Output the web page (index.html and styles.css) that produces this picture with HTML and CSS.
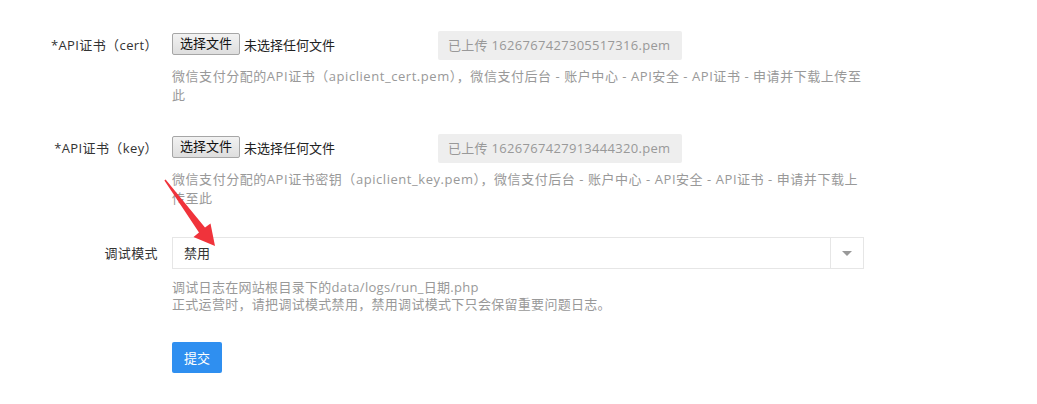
FILE: index.html
```html
<html>
  <head>
    <meta charset="utf-8">
    <title>支付设置</title>
    <link rel="stylesheet" href="styles.css">
  </head>
  <body>
    <div class="form">
      <div class="form-row">
        <label class="form-label">*API证书（cert）</label>
        <div class="form-field">
          <div class="upload-line">
            <div class="file-input">
              <span class="file-btn">选择文件</span>
              <span class="file-name">未选择任何文件</span>
            </div>
            <div class="uploaded">已上传 1626767427305517316.pem</div>
          </div>
          <div class="help">微信支付分配的API证书（apiclient_cert.pem），微信支付后台 - 账户中心 - API安全 - API证书 - 申请并下载上传至此</div>
        </div>
      </div>

      <div class="form-row">
        <label class="form-label">*API证书（key）</label>
        <div class="form-field">
          <div class="upload-line">
            <div class="file-input">
              <span class="file-btn">选择文件</span>
              <span class="file-name">未选择任何文件</span>
            </div>
            <div class="uploaded">已上传 1626767427913444320.pem</div>
          </div>
          <div class="help">微信支付分配的API证书密钥（apiclient_key.pem），微信支付后台 - 账户中心 - API安全 - API证书 - 申请并下载上传至此</div>
        </div>
      </div>

      <div class="form-row">
        <label class="form-label label-select">调试模式</label>
        <div class="form-field">
          <div class="select">
            <span class="select-value">禁用</span>
            <span class="select-arrow"></span>
          </div>
          <div class="help help-debug">调试日志在网站根目录下的data/logs/run_日期.php<br>正式运营时，请把调试模式禁用，禁用调试模式下只会保留重要问题日志。</div>
        </div>
      </div>

      <div class="form-row">
        <div class="form-label"></div>
        <div class="form-field">
          <button class="btn-submit">提交</button>
        </div>
      </div>
    </div>

    <!-- 标注箭头 -->
    <svg class="mark-arrow" width="1037" height="404" viewBox="0 0 1037 404">
      <polygon fill="#f0333b" points="164.4,180.4 165.6,179.6 205,227.6 210.5,223.5 215,246 193.5,237 199,232.4"/>
    </svg>
  </body>
</html>
```

FILE: styles.css
```css
* {
  box-sizing: border-box;
}

body {
  margin: 0;
  font-family: "Open Sans", "Noto Sans CJK SC", sans-serif;
  font-size: 13px;
  color: #333;
  background: #fff;
}

.form {
  padding-top: 31px;
}

.form-row {
  display: flex;
  margin-bottom: 29px;
}

.form-label {
  width: 158px;
  flex-shrink: 0;
  text-align: right;
  font-size: 13px;
  line-height: 29px;
  color: #333;
  margin-right: 14px;
  letter-spacing: 0.4px;
}

.label-select {
  line-height: 32px;
}

.form-field {
  width: 692px;
}

.upload-line {
  display: flex;
  align-items: center;
  height: 29px;
}

.file-input {
  width: 266px;
  display: flex;
  align-items: center;
  margin-top: -3px;
}

.file-btn {
  display: inline-block;
  height: 22px;
  line-height: 19px;
  padding: 0 7px;
  border: 1px solid #a6a6a6;
  border-radius: 2px;
  background: linear-gradient(#f2f2f2, #dedede);
  color: #111;
  font-size: 13px;
}

.file-name {
  margin-left: 4px;
  color: #222;
}

.uploaded {
  width: 244px;
  height: 29px;
  line-height: 29px;
  padding-left: 10px;
  background: #eee;
  border-radius: 2px;
  color: #999;
  font-size: 13px;
  letter-spacing: 0.3px;
}

.help {
  margin-top: 7px;
  line-height: 19px;
  color: #999;
  font-size: 13px;
  letter-spacing: 0.55px;
}

.select {
  display: flex;
  height: 32px;
  border: 1px solid #e6e6e6;
}

.select-value {
  flex: 1;
  line-height: 30px;
  padding-left: 11px;
  color: #333;
}

.select-arrow {
  width: 33px;
  border-left: 1px solid #e6e6e6;
  position: relative;
}

.select-arrow::after {
  content: "";
  position: absolute;
  left: 11px;
  top: 13px;
  border-left: 5px solid transparent;
  border-right: 5px solid transparent;
  border-top: 5px solid #999;
}

.help-debug {
  margin-top: 10px;
  line-height: 17px;
  letter-spacing: 0.3px;
}

.btn-submit {
  width: 50px;
  height: 31px;
  border: none;
  border-radius: 2px;
  background: #2f8ff0;
  color: #fff;
  font-family: inherit;
  font-size: 13px;
  padding: 0;
}

.mark-arrow {
  position: absolute;
  left: 0;
  top: 0;
  pointer-events: none;
}
```
